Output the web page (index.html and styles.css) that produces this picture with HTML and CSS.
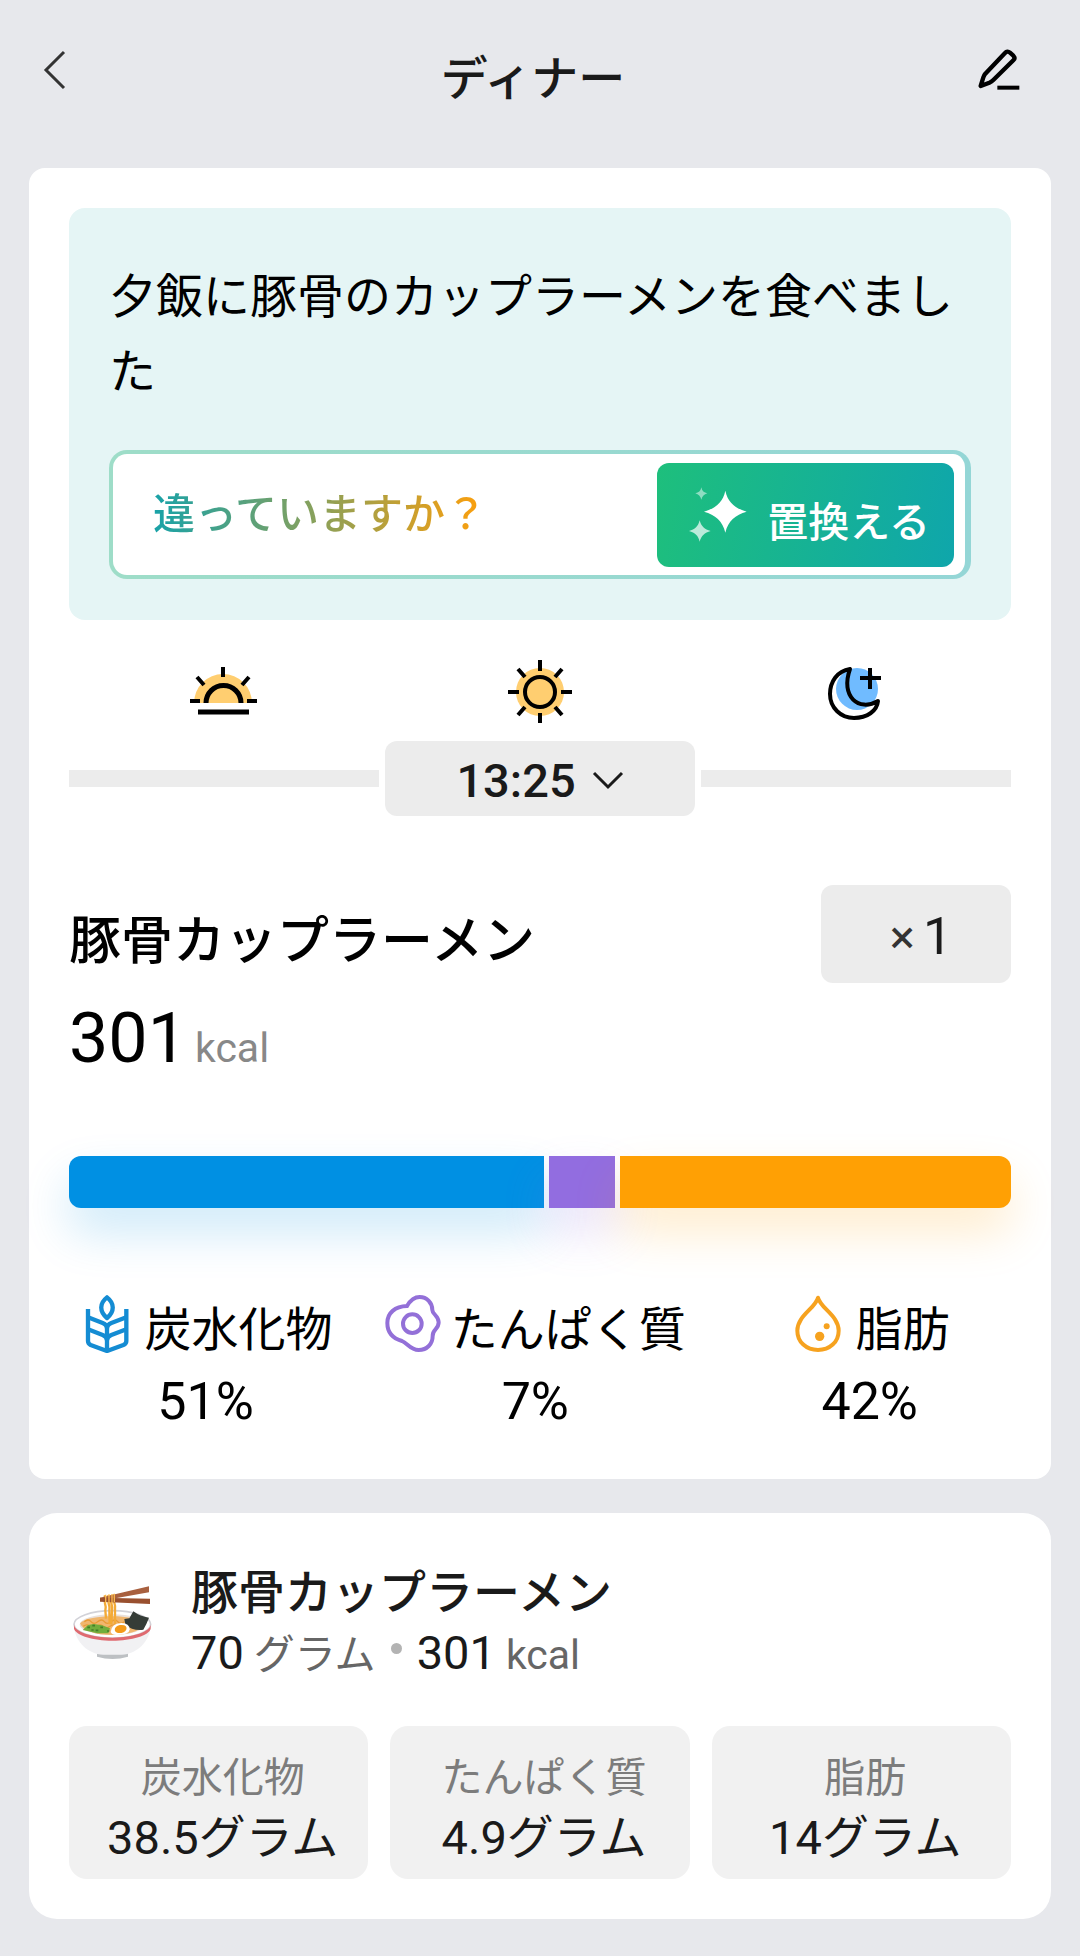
FILE: index.html
```
<!DOCTYPE html>
<html lang="ja">
  <head>
    <meta charset="UTF-8">
    <meta name="viewport" content="width=device-width, initial-scale=1">
    <title>ディナー</title>
    <link rel="stylesheet" href="styles.css">
  </head>
  <body>
  <header class="topbar">
    <button type="button" class="icon-btn" aria-label="戻る">
      <svg width="24" height="44" viewBox="0 0 24 44"><path d="M21 4L3 22l18 18" fill="none" stroke="#333" stroke-width="3"/></svg>
    </button>
    <h1>ディナー</h1>
    <button type="button" class="icon-btn edit" aria-label="編集">
      <svg width="48" height="48" viewBox="45 48 144 144">
        <path d="M135 69Q142 61 150 68L160 77Q167 84 160 91L100 150Q95 155 88 158L62 168L70 142Q72 136 76 131Z" fill="none" stroke="#000" stroke-width="13" stroke-linejoin="round"/>
        <path d="M112 173h66" stroke="#000" stroke-width="12"/>
      </svg>
    </button>
  </header>

  <main>
  <section class="card summary">
    <div class="note">
      <p class="note-text">夕飯に豚骨のカップラーメンを食べました</p>
      <div class="replace-box">
        <span class="replace-hint">違っていますか？</span>
        <button type="button" class="replace-btn">
          <svg width="58" height="56" viewBox="389 172 174 168" fill="#fff">
            <path d="M498 183C505 218 528 236 562 246C528 255 506 274 498 309C490 274 468 255 434 246C468 236 491 218 498 183Z"/>
            <path d="M421 272C425 290 436 299 454 304C436 309 426 318 421 336C417 318 407 309 389 304C407 299 417 290 421 272Z" opacity=".7"/>
            <path d="M426 173C428 184 434 189 444 191C434 194 429 199 426 210C423 199 418 194 408 191C418 189 424 184 426 173Z" opacity=".5"/>
          </svg>
          <span>置換える</span>
        </button>
      </div>
    </div>

    <div class="day-icons">
      <svg width="72" height="64" viewBox="190 659 72 64" fill="none" stroke="#000" stroke-width="5">
        <path d="M194 703a29 29 0 0 1 58 0z" fill="#ffce70" stroke="none"/>
        <path d="M206 703a17 17 0 0 1 35 0"/>
        <path d="M223 667v10M197 677l7 8M249 677l-7 8M190 701h10M247 701h10" stroke-width="4"/>
        <path d="M198 712h51"/>
      </svg>
      <svg width="64" height="64" viewBox="508 659 64 64" fill="none" stroke="#000" stroke-width="4">
        <circle cx="540" cy="692" r="24" fill="#ffce70" stroke="none"/>
        <circle cx="540" cy="692" r="15"/>
        <path d="M540 660v11M540 713v11M508 692h11M561 692h11M518 669l7 8M562 669l-7 8M518 715l7-8M562 715l-7-8"/>
      </svg>
      <svg width="64" height="64" viewBox="823 659 64 64" fill="none" stroke="#000" stroke-width="4">
        <circle cx="858" cy="689" r="21" fill="#70bbff" stroke="none"/>
        <path d="M851 669C838 671 831 682 831 694C831 708 842 718 855 718C868 718 878 711 879 701C860 712 841 697 851 669Z" stroke-linejoin="round"/>
        <path d="M871 668v21M861 678h21"/>
      </svg>
    </div>

    <div class="time-row">
      <span class="track"></span>
      <button type="button" class="time-btn">13:25
        <svg width="32" height="20" viewBox="0 0 32 20"><path d="M2 2l14 14L30 2" fill="none" stroke="#1a1a1a" stroke-width="3"/></svg>
      </button>
      <span class="track"></span>
    </div>

    <div class="product">
      <div>
        <h2>豚骨カップラーメン</h2>
        <p class="energy">301 <small>kcal</small></p>
      </div>
      <button type="button" class="qty-btn"><span class="times">×</span>1</button>
    </div>

    <div class="ratio-bar">
      <span class="carb"></span>
      <span class="protein"></span>
      <span class="fat"></span>
    </div>

    <ul class="legend">
      <li>
        <div class="legend-name">
          <svg width="56" height="58" viewBox="47 43 168 174" fill="none" stroke="#148cd3" stroke-width="13" stroke-linejoin="round">
            <path d="M131 50C108 68 108 92 131 112C154 92 154 68 131 50Z"/>
            <path d="M74 85V181Q74 189 82 193L131 211L180 193Q189 189 189 181V85"/>
            <path d="M74 110L118 127Q131 132 131 145V211M189 110L144 127Q131 132 131 145M74 146L118 163Q131 168 131 180Q131 168 144 163L189 146"/>
          </svg>
          炭水化物
        </div>
        <div class="legend-value">51%</div>
      </li>
      <li>
        <div class="legend-name">
          <svg width="56" height="58" viewBox="974 43 168 174" fill="none" stroke="#9370d8" stroke-width="12">
            <path d="M1040 76C1050 59 1060 49 1078 49C1100 49 1116 67 1116 88C1116 101 1135 105 1135 125C1135 147 1117 144 1117 166C1117 190 1100 208 1075 208C1050 208 1041 187 1025 181C1001 174 981 157 981 127C981 97 1004 77 1040 76Z"/>
            <circle cx="1056" cy="129" r="28"/>
          </svg>
          たんぱく質
        </div>
        <div class="legend-value">7%</div>
      </li>
      <li>
        <div class="legend-name">
          <svg width="56" height="58" viewBox="748 43 168 174" fill="none" stroke="#f6a21f" stroke-width="12">
            <path d="M832 51C840 83 894 105 894 150C894 184 867 208 832 208C797 208 770 184 770 150C770 105 824 83 832 51Z" stroke-linejoin="round"/>
            <circle cx="837" cy="167" r="14" fill="#f6a21f" stroke="none"/>
            <circle cx="858" cy="137" r="9" fill="#f6a21f" stroke="none"/>
          </svg>
          脂肪
        </div>
        <div class="legend-value">42%</div>
      </li>
    </ul>
  </section>

  <section class="card item">
    <div class="item-head">
      <svg width="84" height="84" viewBox="27 33 252 252">
        <path d="M111 240h93v20q-46 14-93 0z" fill="#bdc0c3"/>
        <path d="M42 166C42 210 82 254 130 254H184C234 254 272 208 272 166Z" fill="#f1f1f3"/>
        <ellipse cx="157" cy="163" rx="115" ry="41" fill="#fff" stroke="#d2d2d8" stroke-width="5"/>
        <path d="M42 163C42 185 95 203 157 203S272 185 272 163V176C268 196 215 212 157 212S48 196 42 176Z" fill="#df6a70"/>
        <ellipse cx="157" cy="164" rx="98" ry="31" fill="#e9e1dc"/>
        <path d="M60 160C75 145 115 139 157 139S235 146 252 160C248 181 208 195 157 195S68 182 60 160Z" fill="#f0b66e"/>
        <path d="M73 155q12-10 20 0t20 0t20 0t20 0t20 0t20 0M70 169q12-9 20 0t20 0t20 0t20 0t20 0" fill="none" stroke="#e99a35" stroke-width="4"/>
        <path d="M68 180L84 165L101 162L126 166L150 175L145 190L112 190Z" fill="#72ad3c"/>
        <path d="M82 172h8m7-5h8m2 14h8m6-9h8m-35 8h7m40 3h7" stroke="#447d28" stroke-width="5"/>
        <path d="M135 76c-8 23 7 26 1 45l2 25M145 76c-7 22 8 27 3 45l1 42M153 76c-6 21 7 26 3 45l-2 43M162 74c-7 18 7 25 3 45v43" fill="none" stroke="#f3aa37" stroke-width="7"/>
        <path d="M120 83L267 49V67L120 93Z" fill="#a8603f"/>
        <path d="M120 83L270 86V102L120 95Z" fill="#99502f"/>
        <path d="M137 74v25M147 73v27M156 72v28M163 71v25" stroke="#f9b84b" stroke-width="4"/>
        <path d="M193 147L208 145L220 124Q241 140 267 143Q260 162 250 179Q218 183 196 164Z" fill="#353c37"/>
        <path d="M152 186Q154 161 184 159Q209 160 209 178Q208 195 170 195Q155 195 152 186Z" fill="#fff"/>
        <ellipse cx="182" cy="177" rx="18" ry="12" transform="rotate(-12 182 177)" fill="#f49a19"/>
      </svg>
      <div>
        <h3>豚骨カップラーメン</h3>
        <p class="item-info">70 <small>グラム</small> <i class="dot"></i> 301 <small>kcal</small></p>
      </div>
    </div>
    <dl class="tiles">
      <div><dt>炭水化物</dt><dd>38.5グラム</dd></div>
      <div><dt>たんぱく質</dt><dd>4.9グラム</dd></div>
      <div><dt>脂肪</dt><dd>14グラム</dd></div>
    </dl>
  </section>
  </main>
  </body>
</html>
```

FILE: styles.css
```
* {box-sizing: border-box;}
body {
    margin: 0;
    background: #e7e8ec;
    color: #000;
    font-family: Roboto, "Noto Sans CJK JP", sans-serif;
    font-size: 47px;
}
h1, h2, h3, p, ul, dl, dd {margin: 0; padding: 0;}
h1, h2, h3 {font-weight: 500;}
svg {display: block; flex: none;}
small {font-size: 41px; line-height: 1;}
button {
    border: 0;
    padding: 0;
    background: none;
    color: #1a1a1a;
    font: inherit;
    cursor: pointer;
}

.topbar {
    display: grid;
    grid-template-columns: 1fr auto 1fr;
    align-items: start;
    padding: 40px 57px 50px 43px;
}
.topbar h1 {
    color: #1a1a1a;
    font-size: 47px;
    line-height: 78px;
}
.icon-btn {
    display: flex;
    align-items: center;
    justify-self: start;
    height: 60px;
}
.edit {justify-self: end;}

main {
    display: grid;
    gap: 34px;
    padding: 0 29px 36px;
}
.card {
    padding: 40px;
    border-radius: 16px;
    background: #fff;
}

/* meal note */
.note {
    padding: 51px 40px 41px;
    border-radius: 16px;
    background: #e5f5f5;
}
.note-text {line-height: 75px;}
.replace-box {
    display: flex;
    align-items: center;
    justify-content: space-between;
    margin-top: 41px;
    padding: 9px 11px 8px 40px;
    border: 4px solid transparent;
    border-right-width: 6px;
    border-radius: 18px;
    background: linear-gradient(#fff, #fff) padding-box, linear-gradient(90deg, #9eddc8, #94d6d6) border-box;
}
.replace-hint {
    background: linear-gradient(90deg, #18a2a8, #ff9f0a);
    -webkit-background-clip: text;
    background-clip: text;
    color: transparent;
    font-size: 42px;
    font-weight: 500;
    line-height: 60px;
}
.replace-btn {
    display: flex;
    align-items: center;
    gap: 20px;
    height: 104px;
    padding: 0 24px 0 32px;
    border-radius: 12px;
    background: linear-gradient(100deg, #1ebf7c, #0fa6ab);
    color: #fff;
    font-size: 41px;
    font-weight: 500;
}
.replace-btn span {padding-top: 8px;}

/* time of day */
.day-icons {
    display: grid;
    grid-template-columns: repeat(3, 1fr);
    justify-items: center;
    margin: 39px 0 18px;
}
.time-row {
    display: grid;
    grid-template-columns: repeat(3, 1fr);
    align-items: center;
    gap: 6px;
}
.track {height: 17px; background: #ececec;}
.time-btn, .qty-btn {
    display: flex;
    align-items: center;
    justify-content: center;
    padding-top: 4px;
    border-radius: 12px;
    background: #ececec;
}
.time-btn {
    gap: 16px;
    height: 75px;
    font-weight: 500;
}

.product {
    display: flex;
    align-items: flex-start;
    justify-content: space-between;
    margin-top: 69px;
}
.product h2 {font-size: 52px; line-height: 114px;}
.energy {
    display: flex;
    align-items: baseline;
    gap: 8px;
    font-size: 70px;
    line-height: 78px;
}
.energy small {color: #888;}
.qty-btn {
    gap: 8px;
    width: 190px;
    height: 98px;
    padding-left: 10px;
    font-size: 52px;
}
.times {color: #333; font-size: 47px;}

/* macro split */
.ratio-bar {
    display: grid;
    grid-template-columns: 51fr 7fr 42fr;
    gap: 5px;
    height: 52px;
    margin-top: 79px;
}
.carb {
    border-radius: 12px 0 0 12px;
    background: #0090e3;
    box-shadow: 0 24px 48px rgba(0, 144, 227, .2);
}
.protein {
    background: #926de0;
    box-shadow: 0 24px 48px rgba(146, 109, 224, .2);
}
.fat {
    border-radius: 0 12px 12px 0;
    background: #ffa004;
    box-shadow: 0 24px 48px rgba(255, 160, 4, .2);
}
.legend {
    display: grid;
    grid-template-columns: 29fr 41fr 30fr;
    margin-top: 87px;
    list-style: none;
}
.legend-name {
    display: flex;
    justify-content: center;
    gap: 10px;
    line-height: 70px;
}
.legend-value {
    font-size: 52px;
    line-height: 74px;
    text-align: center;
}

/* food item */
.item {
    padding-top: 50px;
    border-radius: 28px;
    color: #1a1a1a;
}
.item-head {
    display: flex;
    align-items: center;
    gap: 38px;
}
.item h3 {font-size: 47px; line-height: 60px;}
.item-info {
    display: flex;
    align-items: baseline;
    gap: 10px;
    line-height: 60px;
}
.item-info small {color: #666;}
.dot {
    align-self: center;
    width: 11px;
    height: 11px;
    margin: 0 5px 10px;
    border-radius: 50%;
    background: #b3b3b3;
}
.tiles {
    display: grid;
    grid-template-columns: repeat(3, 1fr);
    gap: 22px;
    margin-top: 43px;
    line-height: 60px;
    text-align: center;
}
.tiles div {
    padding: 22px 0 11px 8px;
    border-radius: 18px;
    background: #f1f1f1;
}
.tiles dt {color: #7c7c7c; font-size: 41px;}
```
